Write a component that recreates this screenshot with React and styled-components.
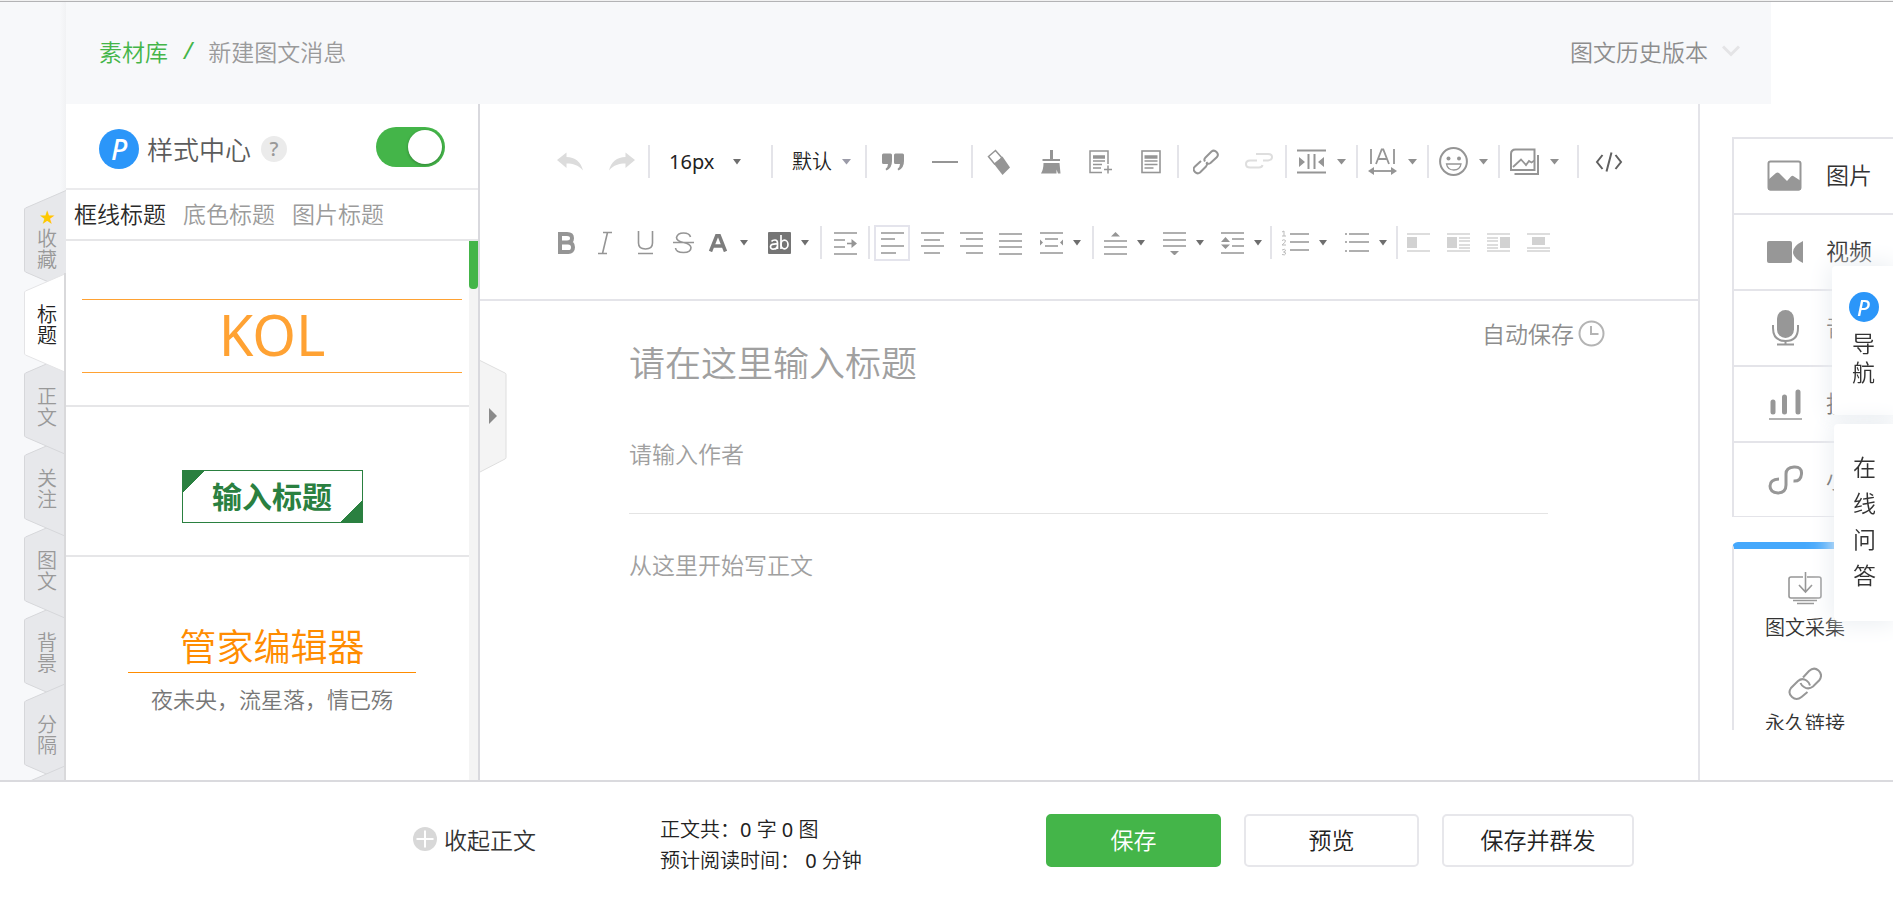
import React, { useState } from "react";
import styled, { createGlobalStyle, css } from "styled-components";

const GlobalStyle = createGlobalStyle`
  * {
    box-sizing: border-box;
  }

  body {
    margin: 0;
    background: #fff;
    overflow: hidden;
  }

  body,
  button,
  input,
  textarea,
  select {
    font-family: "Noto Sans", "Noto Sans CJK SC", sans-serif;
    font-weight: 350;
  }

  button {
    margin: 0;
    padding: 0;
    border: 0;
    background: none;
    color: inherit;
    cursor: pointer;
  }

  svg {
    display: block;
    flex: none;
  }
`;

const Page = styled.div`
  display: flex;
  flex-direction: column;
  height: 100vh;
  border-top: 1px solid #f1f1f1;
`;

const Body = styled.div`
  display: flex;
  flex: 1;
  min-height: 0;
  border-top: 1px solid #b3b3b5;
`;

/* ---------- left rail ---------- */

const Rail = styled.nav`
  flex: none;
  display: flex;
  flex-direction: column;
  width: 66px;
  padding: 197px 0 0 24px;
  overflow: hidden;
  background: linear-gradient(to right, #f7f8fa 60px, #f1f2f4 66px);
`;

const RailTab = styled.button`
  position: relative;
  z-index: ${(p) => p.$z};
  flex: none;
  width: 42px;
  height: ${(p) => (p.$star ? 83 : 82)}px;
  padding: ${(p) => (p.$star ? "0 0 4px 4px" : "4px 0 0 4px")};
  font-size: 20px;
  line-height: 21px;
  color: ${(p) => (p.$active ? "#222" : "#999")};

  svg {
    position: absolute;
    left: 0;
    top: -9px;
  }

  span {
    position: relative;
    display: block;
  }
`;

const Star = styled.span`
  color: #ffc800;
  font-family: "DejaVu Sans", sans-serif;
  font-size: 19px;
`;

/* ---------- header ---------- */

const Main = styled.div`
  flex: 1;
  display: flex;
  flex-direction: column;
  min-width: 0;
`;

const Header = styled.header`
  flex: none;
  display: flex;
  align-items: center;
  justify-content: space-between;
  height: 102px;
  margin-right: 122px;
  padding: 0 31px 4px 33px;
  background: #f7f8fa;
  font-size: 23px;
`;

const Breadcrumb = styled.div`
  display: flex;
  gap: 16px;
  color: #9a9a9a;

  a {
    color: #44b549;
    text-decoration: none;
  }

  i {
    color: #44b549;
    font-weight: 400;
  }
`;

const History = styled.button`
  display: flex;
  align-items: center;
  gap: 14px;
  font-size: 23px;
  color: #8d8d8d;
`;

const Columns = styled.div`
  flex: 1;
  display: flex;
  min-height: 0;
`;

/* ---------- style panel ---------- */

const Panel = styled.section`
  flex: none;
  display: flex;
  flex-direction: column;
  width: 414px;
  border-right: 2px solid #d9d9de;
`;

const PanelHead = styled.div`
  flex: none;
  display: flex;
  align-items: center;
  height: 86px;
  padding: 6px 33px 0;
  border-bottom: 2px solid #ebebed;
  font-size: 26px;
  color: #5c5c5c;
`;

const Logo = styled.span`
  display: flex;
  align-items: center;
  justify-content: center;
  width: ${(p) => p.$size}px;
  height: ${(p) => p.$size}px;
  margin-right: ${(p) => (p.$size > 30 ? 8 : 0)}px;
  border-radius: 50%;
  background: #2b96f9;
  color: #fff;
  font-style: italic;
  font-weight: 500;
  font-size: ${(p) => (p.$size > 30 ? 28 : 22)}px;
  line-height: 1;
`;

const Help = styled.button`
  width: 26px;
  height: 26px;
  margin-left: 10px;
  border-radius: 50%;
  background: #ebebeb;
  color: #999;
  font-size: 20px;
  font-weight: 500;
  line-height: 26px;
`;

const Switch = styled.input`
  appearance: none;
  width: 69px;
  height: 40px;
  margin: 0 0 4px auto;
  border-radius: 20px;
  background: ${(p) => (p.checked ? "#44b549" : "#ccc")};
  cursor: pointer;

  &::before {
    content: "";
    display: block;
    width: 34px;
    height: 34px;
    margin: 3px;
    margin-left: ${(p) => (p.checked ? 32 : 3)}px;
    border-radius: 50%;
    background: #fff;
    box-shadow: 0 1px 3px rgba(0, 0, 0, 0.3);
  }
`;

const PanelTabs = styled.div`
  flex: none;
  display: flex;
  align-items: center;
  gap: 17px;
  height: 51px;
  padding: 0 0 4px 8px;
  border-bottom: 2px solid #e6e6e8;
`;

const PanelTab = styled.button`
  font-size: 23px;
  color: ${(p) => (p.$active ? "#2a2a2a" : "#9b9b9b")};
`;

const Scroller = styled.div`
  flex: 1;
  display: flex;
  min-height: 0;
`;

const StyleList = styled.div`
  flex: 1;
  overflow: hidden;
`;

const Track = styled.div`
  flex: none;
  width: 9px;
  background: #f4f4f4;
`;

const Thumb = styled.div`
  height: 48px;
  border-radius: 0 0 4px 4px;
  background: #44b549;
`;

const StyleItem = styled.div`
  display: flex;
  flex-direction: column;
  align-items: center;
  padding: ${(p) => p.$top}px 7px 32px 16px;
  border-bottom: 2px solid #e6e6e8;
  text-align: center;

  &:last-child {
    border-bottom: 0;
  }
`;

const LinedTitle = styled.div`
  width: 100%;
  padding-bottom: 4px;
  border: solid #ffa233;
  border-width: 1px 0;
  color: #ffa233;
  font-weight: 400;
  font-size: 56px;
  line-height: 68px;
`;

const CornerTitle = styled.div`
  width: 181px;
  border: 1px solid #2a8040;
  background: linear-gradient(135deg, #2a8040 15px, transparent 15px),
    linear-gradient(-45deg, #2a8040 15px, transparent 15px);
  color: #2a8040;
  font-size: 30px;
  font-weight: 700;
  line-height: 51px;
`;

const UnderTitle = styled.div`
  width: 288px;
  padding-bottom: 5px;
  border-bottom: 1px solid #ff8c00;
  color: #ff8c00;
  font-size: 37px;
  line-height: 41px;
`;

const UnderText = styled.div`
  margin-top: 10px;
  color: #777;
  font-size: 22px;
  line-height: 32px;
`;

/* ---------- editor ---------- */

const Editor = styled.section`
  position: relative;
  flex: 1;
  display: flex;
  flex-direction: column;
  min-width: 0;
`;

const Handle = styled.button`
  position: absolute;
  left: 0;
  top: 256px;
`;

const Toolbar = styled.div`
  flex: none;
  display: flex;
  flex-direction: column;
  gap: 48px;
  height: 197px;
  padding: 41px 0 0 64px;
  border-bottom: 2px solid #e4e4e9;
`;

const ToolRow = styled.div`
  display: flex;
  align-items: center;
  height: 33px;
`;

const Divider = styled.span`
  flex: none;
  width: 2px;
  height: 33px;
  background: #e4e4e9;
`;

const Tool = styled.button`
  flex: none;
  display: flex;
  align-items: center;
  justify-content: center;
  gap: ${(p) => p.$gap || 10}px;
  width: ${(p) => p.$w}px;
  height: 36px;
  color: #959595;
  ${(p) =>
    p.$boxed &&
    css`
      margin: 0 4px;
      border: 2px solid #e4e4ec;
    `}
`;

const SelectBox = styled.label`
  flex: none;
  display: flex;
  align-items: center;
  width: ${(p) => p.$w}px;
  padding-left: 19px;
`;

const Select = styled.select`
  appearance: none;
  width: ${(p) => p.$w}px;
  padding: 0;
  border: 0;
  background: none;
  color: #222;
  font-size: 20px;
  font-weight: ${(p) => p.$weight || 350};
  line-height: 33px;
  outline: none;
`;

const Paper = styled.div`
  flex: 1;
  display: flex;
  flex-direction: column;
  padding: 18px 93px 0 149px;
`;

const AutoSave = styled.div`
  display: flex;
  align-items: center;
  justify-content: flex-end;
  gap: 4px;
  height: 28px;
  color: #8d8d8d;
  font-size: 23px;
`;

const fieldStyle = css`
  margin: 0 57px 0 0;
  padding: 0;
  border: 0;
  outline: none;
  background: none;
  color: #333;

  &::placeholder {
    color: #a0a0a0;
    opacity: 1;
  }
`;

const TitleInput = styled.input`
  ${fieldStyle}
  height: 32px;
  font-size: 36px;
  line-height: 32px;
`;

const AuthorInput = styled.input`
  ${fieldStyle}
  height: 127px;
  margin-top: 8px;
  padding-top: 8px;
  border-bottom: 1px solid #e4e4e4;
  font-size: 23px;
`;

const BodyInput = styled.textarea`
  ${fieldStyle}
  flex: 1;
  margin-top: 35px;
  font-size: 23px;
  line-height: 32px;
  resize: none;
`;

/* ---------- right side ---------- */

const Aside = styled.aside`
  flex: none;
  width: 195px;
  padding: 33px 0 50px 32px;
  overflow: hidden;
  border-left: 2px solid #e4e4e9;
`;

const AsideClip = styled.div`
  height: 100%;
  overflow: hidden;
`;

const MediaCard = styled.div`
  width: 288px;
  border: 2px solid #e4e4e9;
  border-bottom-width: 1px;
`;

const MediaRow = styled.button`
  display: flex;
  align-items: center;
  width: 100%;
  height: 76px;
  padding-left: 33px;
  border-bottom: 2px solid #e4e4e9;
  font-size: 23px;
  color: #333;

  &:last-child {
    height: 73px;
    border-bottom: 0;
  }

  span {
    padding-bottom: 4px;
  }

  svg {
    width: 36px;
    margin-right: 23px;
    color: #979797;
  }
`;

const ToolCard = styled.div`
  display: grid;
  grid-template-columns: 1fr 1fr;
  gap: 8px 0;
  width: 288px;
  margin-top: 25px;
  padding-top: 22px;
  border: 2px solid #e4e4e9;
  border-top: 7px solid #45a8fc;
  border-radius: 6px 6px 0 0;
`;

const CardTool = styled.button`
  display: flex;
  flex-direction: column;
  align-items: center;
  height: 88px;
  font-size: 20px;
  line-height: 30px;
  color: #333;

  svg {
    margin-bottom: 8px;
    color: #979797;
  }
`;

const Floating = styled.div`
  position: fixed;
  right: 0;
  top: 266px;
  display: flex;
  flex-direction: column;
  align-items: flex-end;
  gap: 9px;
`;

const FloatButton = styled.button`
  display: flex;
  flex-direction: column;
  align-items: center;
  justify-content: center;
  width: ${(p) => p.$w}px;
  height: ${(p) => p.$h}px;
  padding: 0 0 3px 2px;
  border-radius: 4px 0 0 4px;
  background: #fff;
  box-shadow: 0 0 24px 2px #e9edf1;
  font-size: 23px;
  line-height: ${(p) => p.$line}px;
  color: #333;

  ${Logo} {
    margin-bottom: 7px;
  }
`;

/* ---------- footer ---------- */

const Footer = styled.footer`
  flex: none;
  position: relative;
  display: flex;
  align-items: center;
  height: 120px;
  padding: 0 0 2px 413px;
  border-top: 2px solid #dadade;
  background: #fff;
`;

const Collapse = styled.button`
  display: flex;
  align-items: center;
  gap: 7px;
  width: 247px;
  padding-bottom: 2px;
  font-size: 23px;
  color: #333;
`;

const Stats = styled.div`
  width: 386px;
  padding-top: 9px;
  font-size: 20px;
  line-height: 31px;
  color: #222;

  b {
    font-weight: 400;
  }
`;

const Action = styled.button`
  width: ${(p) => p.$w || 175}px;
  height: 53px;
  margin-right: 23px;
  padding-bottom: 2px;
  border: 2px solid ${(p) => (p.$primary ? "#44b549" : "#e7e7eb")};
  border-radius: 5px;
  background: ${(p) => (p.$primary ? "#44b549" : "#fff")};
  color: ${(p) => (p.$primary ? "#fff" : "#222")};
  font-size: 23px;
`;

/* ---------- icons ---------- */

const Icon = ({ w = 24, h = 24, sw = 2, color, children, ...rest }) => (
  <svg
    width={w}
    height={h}
    viewBox={`0 0 ${w} ${h}`}
    fill="none"
    stroke="currentColor"
    strokeWidth={sw}
    color={color}
    aria-hidden="true"
    {...rest}
  >
    {children}
  </svg>
);

const Caret = ({ color = "#6e6e6e", big }) =>
  big ? (
    <Icon w={9} h={6} color={color}><path d="M0 0h9L4.5 5.5z" fill="currentColor" stroke="none" /></Icon>
  ) : (
    <Icon w={8} h={6} color={color}><path d="M0 0h8L4 5.5z" fill="currentColor" stroke="none" /></Icon>
  );

// horizontal strokes given as [x1, x2, y]
const Lines = ({ rows, w, h, sw = 1.6, color, children }) => (
  <Icon w={w} h={h} sw={sw} color={color}>
    <path d={rows.map(([a, b, y]) => `M${a} ${y}H${b}`).join("")} />
    {children}
  </Icon>
);

const UndoIcon = ({ flip }) => (
  <Icon w={26} h={20} color="#dcdcdc">
    <path
      d="M0 8L9.5 0.500v4.500C18 5 24 10 26 18.500C21 13 16 11.500 9.500 11.500v4.500z"
      fill="currentColor"
      stroke="none"
      transform={flip ? "matrix(-1 0 0 1 26 0)" : undefined}
    />
  </Icon>
);

const QuoteIcon = () => (
  <Icon w={22} h={18}>
    <path
      d="M1.500 0.500h7q1.500 0 1.500 1.500v6q0 7-5.500 9.500l-1-1.500q2.500-2 2.500-5h-4.500q-1.500 0-1.500-1.500v-7.500q0-1.500 1.500-1.500zM13.500 0.500h7q1.500 0 1.500 1.500v6q0 7-5.500 9.500l-1-1.500q2.500-2 2.500-5h-4.500q-1.500 0-1.500-1.500v-7.500q0-1.500 1.500-1.500z"
      fill="currentColor"
      stroke="none"
    />
  </Icon>
);

const EraserIcon = () => (
  <Icon w={24} h={26} sw={1.5}>
    <path d="M1.500 7.500L8.500 1.500L15 9L7.500 15z" />
    <path d="M7 15L15.500 7.500L23 18.500L15.500 26z" fill="currentColor" stroke="none" />
  </Icon>
);

const BrushIcon = () => (
  <Icon w={20} h={24}>
    <path d="M9 0h3v9h7v2H1.500V9H9z" fill="currentColor" stroke="none" />
    <path d="M2.500 13h16l1 10.500h-2.500l-1.500-4v4H0q2.500-4 2.500-10.500z" fill="currentColor" stroke="none" />
  </Icon>
);

const DocAddIcon = () => (
  <Icon w={24} h={24} sw={1.5}>
    <path d="M13 22.500H1V1h18v13" />
    <path d="M4 7h12" strokeWidth="3.500" />
    <path d="M4 11h12M4 14.500h9M4 18h8M15 19.500h8M19 15.500v8" />
  </Icon>
);

const DocIcon = () => (
  <Icon w={20} h={24} sw={1.600}>
    <rect x="1" y="1" width="18" height="21.500" />
    <path d="M3.500 7h13" strokeWidth="3.500" />
    <path d="M3.500 11h13M3.500 14.500h13M3.500 18h9" />
  </Icon>
);

const LinkIcon = () => (
  <Icon w={26} h={26} sw={2}>
    <path d="M12 12.500q-1.500-2 0.500-4l6-6q2.500-2 5 0.500t0.500 5l-6.500 6q-2 1.500-4.500 0" />
    <path d="M13.500 13q1.500 2-0.500 4.500l-6 6q-2.500 2-5-0.500t-0.500-5l6.500-6" />
  </Icon>
);

const UnlinkIcon = () => (
  <Icon w={28} h={24} sw={2} color="#dedede">
    <path d="M11 4h12q4 0 4 3t-4 3.500h-5M12 10.500H5q-4 0-4 3.500t4 3.500h9q3 0 3.500-2.500" />
  </Icon>
);

const PaddingIcon = () => (
  <Icon w={29} h={25}>
    <path d="M0 1.500h29M0 23.500h29M11.500 5v15M17.500 5v15" />
    <path d="M2 8v10l6-5zM27 8v10l-6-5z" fill="currentColor" stroke="none" />
  </Icon>
);

const LetterSpaceIcon = () => (
  <Icon w={29} h={27} sw={1.800}>
    <path d="M3 1v15M26 1v15M8 16L13.700 1.500h1.600L21 16M10 11h9" />
    <path d="M4 23h21" />
    <path d="M0 23l6-4v8zM29 23l-6-4v8z" fill="currentColor" stroke="none" />
  </Icon>
);

const SmileIcon = () => (
  <Icon w={29} h={29}>
    <circle cx="14.500" cy="14.500" r="13.400" />
    <circle cx="9.500" cy="11.500" r="2" fill="currentColor" stroke="none" />
    <circle cx="20" cy="11.500" r="2" fill="currentColor" stroke="none" />
    <path d="M7.500 17h14.500q-1 6-7.200 6t-7.300-6z" strokeWidth="1.300" />
  </Icon>
);

const GalleryIcon = () => (
  <Icon w={29} h={27}>
    <path d="M5.500 1.500h19v20.500h-23.500v-16q0-4.500 4.500-4.500zM4.500 26h23.500V7" />
    <path d="M3 19l8-7.500 5 5.500 3-4 2.500 1.500 3-2" strokeWidth="1.800" />
  </Icon>
);

const CodeIcon = () => (
  <Icon w={28} h={20} color="#606060">
    <path d="M7.500 3L2 10l5.500 7M20.500 3L26 10l-5.500 7M16.500 0.500L11.500 19.500" />
  </Icon>
);

const BoldIcon = () => (
  <Icon w={18} h={22} sw={4}>
    <path d="M3 2h7q5 0 5 4.200t-5 4.200H3zM3 10.500h8q5 0 5 4.800T11 20H3z" />
  </Icon>
);

const ItalicIcon = () => (
  <Icon w={14} h={24} sw={1.600}>
    <path d="M5 1.500h9M0 22.500h9M9.500 1.500l-5 21" />
  </Icon>
);

const UnderlineIcon = () => (
  <Icon w={17} h={24} sw={1.600}>
    <path d="M1.500 0v12q0 6 7 6t7-6V0M1 22.500h15" />
  </Icon>
);

const StrikeIcon = () => (
  <Icon w={21} h={22} sw={1.600}>
    <path d="M17.500 5q-1-4-7-4T3.500 5.500q0 3.500 7 5t7.500 5q0 5-7.500 5t-8-4.500M0 10.500h21" />
  </Icon>
);

const ColorIcon = () => (
  <Icon w={24} h={18} sw={3.500} color="#7d7d7d">
    <path d="M4.500 17.500L11 1h2l6.500 16.500M7 12h10" />
  </Icon>
);

const HighlightIcon = () => (
  <Icon w={24} h={22} color="#757575">
    <rect x="1" y="0" width="23" height="22" rx="1" fill="currentColor" stroke="none" />
    <g stroke="#fff" strokeWidth="1.700">
      <path d="M4.500 9.500q1-1.500 3.500-1.500 2.500 0 2.500 3v6M10.500 12q-7-0.500-7 2.500t3.500 2.500q3 0 3.500-3M14 3v14" />
      <ellipse cx="17.500" cy="12.500" rx="3.500" ry="4.300" />
    </g>
  </Icon>
);

const IndentIcon = () => (
  <Lines rows={[[1, 24, 2], [1, 12, 9], [1, 12, 16], [1, 24, 23]]}>
    <path d="M14 12.500h6" />
    <path d="M18.500 8v9l5.500-4.500z" fill="currentColor" stroke="none" />
  </Lines>
);

const alignRows = {
  left: [[1, 24, 2], [1, 15, 8], [1, 24, 15], [1, 16, 22]],
  center: [[1, 24, 2], [4, 20, 9], [1, 24, 15], [4, 20, 22]],
  right: [[1, 24, 2], [7, 24, 8], [1, 24, 15], [7, 24, 22]],
  justify: [[1, 24, 3], [1, 24, 10], [1, 24, 16], [1, 24, 23]],
};

const MarginIcon = () => (
  <Lines rows={[[1, 24, 2], [6, 19, 8], [6, 19, 15], [1, 24, 22]]}>
    <path d="M1 8.500v6l3-3zM24 8.500v6l-3-3z" fill="currentColor" stroke="none" />
  </Lines>
);

const BeforeIcon = () => (
  <Lines rows={[[1, 24, 10], [1, 24, 16], [1, 24, 23]]}>
    <path d="M8 5.500h9L12.500 1z" fill="currentColor" stroke="none" />
  </Lines>
);

const AfterIcon = () => (
  <Lines rows={[[1, 24, 2], [1, 24, 9], [1, 24, 15]]}>
    <path d="M8 20h9l-4.500 4.500z" fill="currentColor" stroke="none" />
  </Lines>
);

const LeadingIcon = () => (
  <Lines rows={[[1, 24, 2], [12, 24, 8], [12, 24, 15], [1, 24, 22]]}>
    <path d="M1 11h9L5.500 6zM1 13.500h9l-4.500 4.500z" fill="currentColor" stroke="none" />
  </Lines>
);

const OrderedIcon = () => (
  <Lines w={28} h={28} rows={[[9, 28, 5], [9, 28, 13], [9, 28, 21]]}>
    <path
      d="M1 3l2-1v5M1 7h4M1 11.500q2-1.500 3.500 0 0.500 1.500-3.500 4.500h4M1 21q3-1.500 3.500 0 0 2-2 2 2.500 0 2 2-0.500 1.500-3.500 0.500"
      strokeWidth="1"
      stroke="#bbb"
    />
  </Lines>
);

const BulletIcon = () => (
  <Lines rows={[[4, 24, 3], [4, 24, 11], [4, 24, 20], [0, 2, 3], [0, 2, 11], [0, 2, 20]]} />
);

const floatIcons = {
  单独左浮动: { rows: [[1, 24, 3], [1, 24, 20]], box: [1, 6, 10, 11] },
  左浮动: {
    rows: [[1, 24, 3], [13, 24, 7], [13, 24, 10], [13, 24, 14], [13, 24, 17], [1, 24, 20]],
    box: [1, 6, 10, 11],
  },
  右浮动: {
    rows: [[1, 24, 3], [1, 12, 7], [1, 12, 10], [1, 12, 14], [1, 12, 17], [1, 24, 20]],
    box: [14, 6, 10, 11],
  },
  居中: { rows: [[1, 24, 3], [1, 24, 17], [1, 24, 20]], box: [6, 6, 13, 8] },
};

const FloatIcon = ({ rows, box: [x, y, width, height] }) => (
  <Lines rows={rows} color="#d2d2d2">
    <rect x={x} y={y} width={width} height={height} fill="currentColor" stroke="none" />
  </Lines>
);

const ClockIcon = () => (
  <Icon w={27} h={27} color="#b4b4b4">
    <circle cx="13.500" cy="13.500" r="12" />
    <path d="M13 6v8h7.500" />
  </Icon>
);

const mediaItems = [
  {
    label: "图片",
    icon: (
      <Icon w={36} h={32}>
        <rect x="1.500" y="1.500" width="32" height="28" rx="2" />
        <path d="M1 20l8-7q1.500-1 3 0l8 8 4-4.500q1.500-1.500 3 0l7 4.500v7q0 2.500-2.500 2.500h-28Q1 30.500 1 28z" fill="currentColor" stroke="none" />
      </Icon>
    ),
  },
  {
    label: "视频",
    icon: (
      <Icon w={36} h={22}>
        <rect width="25" height="22" rx="2" fill="currentColor" stroke="none" />
        <path d="M36 0v22q-10-5-10-11T36 0z" fill="currentColor" stroke="none" />
      </Icon>
    ),
  },
  {
    label: "音频",
    icon: (
      <Icon w={36} h={38}>
        <rect x="10" y="1" width="17" height="28" rx="8.500" fill="currentColor" stroke="none" />
        <path d="M6 16v3q0 13 12.500 13T31 19v-3M18.500 32v3M10 35.500h17" />
      </Icon>
    ),
  },
  {
    label: "投票",
    icon: (
      <Icon w={36} h={32} strokeLinecap="round" sw={5}>
        <path d="M6 14v10M17.500 9v15M31 4v20" />
        <path d="M2 31h33" strokeWidth="1.500" strokeLinecap="butt" />
      </Icon>
    ),
  },
  {
    label: "小程序",
    icon: (
      <Icon w={36} h={30} sw={3}>
        <path d="M12 14q-9 0.500-9 7t8 7q8-0.500 8-8V9q0-6.500 8-7t7.500 7-8 7" />
      </Icon>
    ),
  },
];

const CollectIcon = () => (
  <Icon w={34} h={34} sw={1.600}>
    <path d="M15 6H3q-2 0-2 2v17q0 2 2 2h28q2 0 2-2V8q0-2-2-2H19M17.500 1v19M11 14l6.500 7 6.500-7" />
    <path d="M5 29.500h24M9 32.500h17" />
  </Icon>
);

const ChainIcon = () => (
  <Icon w={34} h={34} sw={2}>
    <path d="M15 10.500l6-6.500q5-4.500 9.500-0.500t1 9.500L25 19.500q-4.500 3.500-9 0.500-2.500-1.500-3.500-4" />
    <path d="M19.500 25l-6 5q-5 4-9.500 0t-1-9l7-7q4-3.500 8.500-0.500 3 2 3.500 5" />
  </Icon>
);

/* ---------- data ---------- */

const railTabs = [
  { label: "收藏", star: true, z: 1 },
  { label: "标题", z: 6 },
  { label: "正文", z: 5 },
  { label: "关注", z: 4 },
  { label: "图文", z: 3 },
  { label: "背景", z: 2 },
  { label: "分隔", z: 3 },
  { label: "", z: 4 },
];

const panelTabs = ["框线标题", "底色标题", "图片标题"];

const Split = ({ w, label, big, children }) => (
  <Tool $w={w} $gap={big && 11} aria-label={label}>
    {children}
    <Caret big={big} color={big ? "#8f8f8f" : undefined} />
  </Tool>
);

const StyleRail = () => {
  const [active, setActive] = useState("标题");

  return (
    <Rail>
      {railTabs.map(({ label, star, z }) => (
        <RailTab
          key={label}
          $z={z}
          $star={star}
          $active={label === active}
          onClick={() => setActive(label)}
        >
          <Icon w={42} h={100} sw={1}>
            <path
              d="M42 0.500L1.500 18Q0.500 18.500 0.500 20V80Q0.500 81.500 1.500 82L42 99.500"
              fill={label === active ? "#fff" : "#e7e8eb"}
              stroke={label === active ? "#e4e4e6" : "#d6d7da"}
            />
            {!star && <path d="M41 0V100" stroke="#d9d9db" strokeWidth="2" />}
          </Icon>
          {star && <Star>★</Star>}
          {label.split("").map((char) => (
            <span key={char}>{char}</span>
          ))}
        </RailTab>
      ))}
    </Rail>
  );
};

const StylePanel = () => {
  const [enabled, setEnabled] = useState(true);
  const [tab, setTab] = useState(panelTabs[0]);

  return (
    <Panel>
      <PanelHead>
        <Logo $size={40}>P</Logo>
        <label htmlFor="style-center">样式中心</label>
        <Help>?</Help>
        <Switch
          id="style-center"
          type="checkbox"
          checked={enabled}
          onChange={(e) => setEnabled(e.target.checked)}
        />
      </PanelHead>
      <PanelTabs>
        {panelTabs.map((name) => (
          <PanelTab key={name} $active={name === tab} onClick={() => setTab(name)}>
            {name}
          </PanelTab>
        ))}
      </PanelTabs>
      <Scroller>
        <StyleList>
          <StyleItem $top={58}>
            <LinedTitle>KOL</LinedTitle>
          </StyleItem>
          <StyleItem $top={63}>
            <CornerTitle>输入标题</CornerTitle>
          </StyleItem>
          <StyleItem $top={69}>
            <UnderTitle>管家编辑器</UnderTitle>
            <UnderText>夜未央，流星落，情已殇</UnderText>
          </StyleItem>
        </StyleList>
        <Track>
          <Thumb />
        </Track>
      </Scroller>
    </Panel>
  );
};

const EditorToolbar = () => (
  <Toolbar>
    <ToolRow>
      <Tool $w={52} aria-label="撤销"><UndoIcon /></Tool>
      <Tool $w={52} aria-label="重做"><UndoIcon flip /></Tool>
      <Divider />
      <SelectBox $w={121}>
        <Select $w={64} $weight={400} aria-label="字号" defaultValue="16px">
          <option>14px</option>
          <option>16px</option>
          <option>18px</option>
        </Select>
        <Caret />
      </SelectBox>
      <Divider />
      <SelectBox $w={92}>
        <Select $w={50} aria-label="字体" defaultValue="默认">
          <option>默认</option>
          <option>宋体</option>
        </Select>
        <Caret big color="#9b9ba8" />
      </SelectBox>
      <Divider />
      <Tool $w={52} aria-label="引用"><QuoteIcon /></Tool>
      <Tool $w={52} aria-label="分隔线"><Lines w={26} h={4} sw={2} rows={[[0, 26, 2]]} /></Tool>
      <Divider />
      <Tool $w={52} aria-label="清除格式"><EraserIcon /></Tool>
      <Tool $w={52} aria-label="格式刷"><BrushIcon /></Tool>
      <Tool $w={48} aria-label="插入模板"><DocAddIcon /></Tool>
      <Tool $w={52} aria-label="模板"><DocIcon /></Tool>
      <Divider />
      <Tool $w={54} aria-label="超链接"><LinkIcon /></Tool>
      <Tool $w={52} aria-label="取消链接"><UnlinkIcon /></Tool>
      <Divider />
      <Split w={69} big label="两端缩进"><PaddingIcon /></Split>
      <Divider />
      <Split w={69} big label="字间距"><LetterSpaceIcon /></Split>
      <Divider />
      <Split w={69} big label="表情"><SmileIcon /></Split>
      <Divider />
      <Split w={69} big label="图片"><GalleryIcon /></Split>
      <Tool $w={8} as="span" />
      <Divider />
      <Tool $w={60} aria-label="源代码"><CodeIcon /></Tool>
    </ToolRow>
    <ToolRow>
      <Tool $w={44} aria-label="加粗"><BoldIcon /></Tool>
      <Tool $w={34} aria-label="斜体"><ItalicIcon /></Tool>
      <Tool $w={46} aria-label="下划线"><UnderlineIcon /></Tool>
      <Tool $w={30} aria-label="删除线"><StrikeIcon /></Tool>
      <Split w={58} label="字体颜色"><ColorIcon /></Split>
      <Split w={64} label="背景色"><HighlightIcon /></Split>
      <Divider />
      <Tool $w={46} aria-label="首行缩进"><IndentIcon /></Tool>
      <Divider />
      <Tool $w={36} $boxed aria-label="左对齐"><Lines rows={alignRows.left} /></Tool>
      <Tool $w={36} aria-label="居中对齐"><Lines rows={alignRows.center} /></Tool>
      <Tool $w={42} aria-label="右对齐"><Lines rows={alignRows.right} /></Tool>
      <Tool $w={36} aria-label="两端对齐"><Lines rows={alignRows.justify} /></Tool>
      <Split w={64} label="页边距"><MarginIcon /></Split>
      <Divider />
      <Split w={60} label="段前距"><BeforeIcon /></Split>
      <Split w={58} label="段后距"><AfterIcon /></Split>
      <Split w={58} label="行间距"><LeadingIcon /></Split>
      <Divider />
      <Split w={64} label="有序列表"><OrderedIcon /></Split>
      <Split w={60} label="无序列表"><BulletIcon /></Split>
      <Divider />
      {Object.entries(floatIcons).map(([name, icon]) => (
        <Tool key={name} $w={40} aria-label={name}><FloatIcon {...icon} /></Tool>
      ))}
    </ToolRow>
  </Toolbar>
);

const App = () => (
  <Page>
    <GlobalStyle />
    <Body>
      <StyleRail />
      <Main>
        <Header>
          <Breadcrumb>
            <a href="#library">素材库</a>
            <i>/</i>
            <span>新建图文消息</span>
          </Breadcrumb>
          <History>
            图文历史版本
            <Icon w={18} h={12} sw={3} color="#e4e4e6"><path d="M1 1.500l8 8 8-8" /></Icon>
          </History>
        </Header>
        <Columns>
          <StylePanel />
          <Editor>
            <EditorToolbar />
            <Paper>
              <AutoSave>
                自动保存
                <ClockIcon />
              </AutoSave>
              <TitleInput aria-label="标题" placeholder="请在这里输入标题" />
              <AuthorInput aria-label="作者" placeholder="请输入作者" />
              <BodyInput aria-label="正文" placeholder="从这里开始写正文" />
            </Paper>
            <Handle aria-label="展开">
              <Icon w={27} h={113} sw={1}>
                <path d="M0 0.500L25 13q1 0.500 1 1.500v83q0 1-1 1.500L0 112" fill="#f4f4f4" stroke="#dedede" />
                <path d="M9 48v16l8-8z" fill="#8a8a8a" stroke="none" />
              </Icon>
            </Handle>
          </Editor>
          <Aside>
            <AsideClip>
              <MediaCard>
                {mediaItems.map(({ label, icon }) => (
                  <MediaRow key={label}>
                    {icon}
                    <span>{label}</span>
                  </MediaRow>
                ))}
              </MediaCard>
              <ToolCard>
                <CardTool>
                  <CollectIcon />
                  图文采集
                </CardTool>
                <span />
                <CardTool>
                  <ChainIcon />
                  永久链接
                </CardTool>
              </ToolCard>
            </AsideClip>
          </Aside>
        </Columns>
      </Main>
    </Body>
    <Floating>
      <FloatButton $w={61} $h={149} $line={29}>
        <Logo $size={30}>P</Logo>
        <span>导</span>
        <span>航</span>
      </FloatButton>
      <FloatButton $w={59} $h={197} $line={36}>
        <span>在</span>
        <span>线</span>
        <span>问</span>
        <span>答</span>
      </FloatButton>
    </Floating>
    <Footer>
      <Collapse>
        <Icon w={24} h={24} sw={2}>
          <circle cx="12" cy="12" r="12" fill="#d8d8d8" stroke="none" />
          <path d="M3.500 12h17M12 3.500v17" stroke="#fff" />
        </Icon>
        收起正文
      </Collapse>
      <Stats>
        <div>正文共：<b>0</b> 字 <b>0</b> 图</div>
        <div>预计阅读时间： <b>0</b> 分钟</div>
      </Stats>
      <Action $primary>保存</Action>
      <Action>预览</Action>
      <Action $w={192}>保存并群发</Action>
    </Footer>
  </Page>
);

export default App;
